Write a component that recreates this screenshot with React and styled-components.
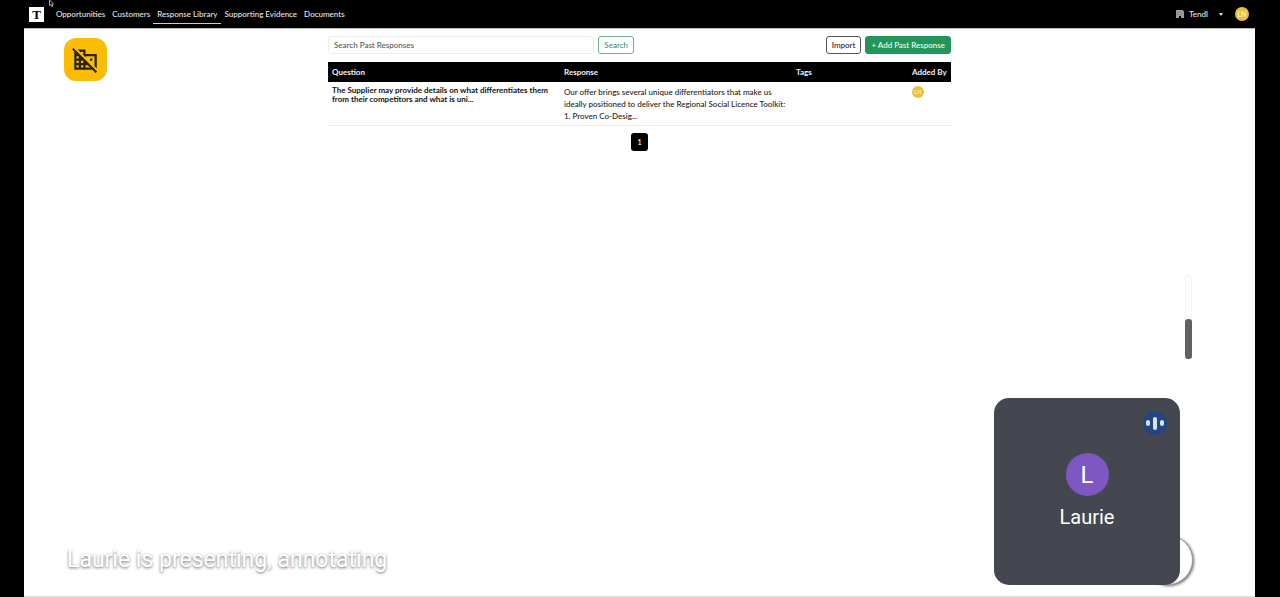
import React from "react";
import styled, { createGlobalStyle } from "styled-components";

const GlobalStyle = createGlobalStyle`
  * { box-sizing: border-box; }
  body {
    margin: 0;
    background: #000;
    color: #1c1c1c;
    font: 500 8px/12px Lato, "Noto Sans", sans-serif;
  }
  button, input, select { font: inherit; }
`;

const Stage = styled.div`
  position: relative;
  display: flex;
  flex-direction: column;
  min-height: 100vh;
  padding: 0 25px 0 24px;
  overflow: hidden;
`;

const NavBar = styled.header`
  display: flex;
  align-items: center;
  justify-content: space-between;
  height: 28px;
  padding: 0 6px 0 5px;
  background: #000;
  color: #e8e8e8;
`;

const NavGroup = styled.nav`
  display: flex;
  align-items: center;
  gap: 7px;
`;

const Logo = styled.a`
  display: grid;
  place-items: center;
  width: 15px;
  height: 15px;
  margin-right: 5px;
  background: #fff;
  color: #000;
  font: bold 13px/15px "Liberation Serif", serif;
  text-decoration: none;
`;

const NavLink = styled.a`
  position: relative;
  color: inherit;
  text-decoration: none;

  &[aria-current="page"]::after {
    content: "";
    position: absolute;
    inset: auto -4px -4px;
    height: 1px;
    background: #ccc;
  }
`;

const Account = styled.div`
  display: flex;
  align-items: center;
  gap: 4px;
`;

const OrgPicker = styled.label`
  display: flex;
  align-items: center;
  gap: 5px;
`;

const OrgSelect = styled.select`
  width: 25px;
  padding: 0;
  border: 0;
  appearance: none;
  background: transparent;
  color: #e8e8e8;
`;

const Avatar = styled.span`
  display: grid;
  place-items: center;
  width: ${(p) => p.$size}px;
  height: ${(p) => p.$size}px;
  margin-left: ${(p) => p.$gap || 0}px;
  border-radius: 50%;
  background: #e9c13b;
  color: #fff6d8;
  font-size: ${(p) => (p.$size > 12 ? 7 : 6)}px;
  line-height: 1;
`;

const Main = styled.main`
  flex: 1;
  padding: 7px 16px;
  border-top: 1px solid #bbb;
  border-bottom: 1px solid #ddd;
  background: #fff;
`;

const Container = styled.div`
  max-width: 623px;
  margin: 0 auto;
`;

const Toolbar = styled.div`
  display: flex;
  justify-content: space-between;
  gap: 16px;
  margin-bottom: 8px;
`;

const SearchForm = styled.form`
  display: flex;
  flex: 0 1 306px;
  gap: 4px;
`;

const Actions = styled.div`
  display: flex;
  gap: 4px;
`;

const SearchInput = styled.input`
  flex: 1;
  min-width: 0;
  height: 18px;
  padding: 0 5px;
  border: 1px solid #ececec;
  border-radius: 3px;
  background: #fff;
  color: #333;
  &::placeholder { color: #555; opacity: 1; }
`;

const tones = {
  outline: ["#fff", "#38956a", "#6fb094"],
  dark: ["#fff", "#222", "#555"],
  solid: ["#22965a", "#effff5", "#22965a"],
};

const Button = styled.button`
  height: 18px;
  padding: 0 5px;
  border: 1px solid ${(p) => tones[p.$tone][2]};
  border-radius: 3px;
  background: ${(p) => tones[p.$tone][0]};
  color: ${(p) => tones[p.$tone][1]};
  white-space: nowrap;
`;

const Table = styled.table`
  width: 100%;
  table-layout: fixed;
  border-collapse: collapse;
  border-bottom: 1px solid #ececec;
`;

const HeadCell = styled.th`
  width: ${(p) => p.$width || "auto"};
  height: 20px;
  padding: 0 4px;
  background: #000;
  color: #f4f4f4;
  text-align: left;
  white-space: nowrap;
`;

const Cell = styled.td`
  padding: 4px 4px 3px;
  vertical-align: top;
  white-space: pre-line;
`;

const Question = styled(Cell)`
  color: #111;
  font-weight: bold;
  line-height: 9px;
`;

const Pagination = styled.nav`
  display: flex;
  justify-content: center;
  margin-top: 7px;
`;

const PageButton = styled.button`
  width: 17px;
  height: 18px;
  padding: 0;
  border: 0;
  border-radius: 3px;
  background: #000;
  color: #fff;
`;

const CompanyBadge = styled.div`
  position: absolute;
  top: 38px;
  left: 64px;
  display: grid;
  place-items: center;
  width: 43px;
  height: 43px;
  border-radius: 12px;
  background: #fbbc04;
  color: #2c230c;
`;

const Pointer = styled.svg`
  position: absolute;
  top: 0;
  left: 49px;
`;

const ScrollTrack = styled.div`
  position: absolute;
  top: 275px;
  right: 88px;
  display: flex;
  align-items: flex-end;
  width: 7px;
  height: 84px;
  border: 1px solid #f3f3f3;
  border-radius: 4px;
`;

const ScrollThumb = styled.div`
  flex: none;
  width: 7px;
  height: 40px;
  margin: 0 -1px -1px;
  border-radius: 3px;
  background: #5f6164;
`;

const Caption = styled.p`
  position: absolute;
  bottom: 23px;
  left: 67px;
  margin: 0;
  color: #fff;
  font: 400 23px/28px Roboto, sans-serif;
  text-shadow: 0 1px 3px rgba(0, 0, 0, 0.6);
`;

const RoundButton = styled.button`
  position: absolute;
  right: 87px;
  bottom: 12px;
  width: 50px;
  height: 50px;
  border: 1px solid #999;
  border-radius: 50%;
  background: #fff;
  box-shadow: 1px 1px 3px rgba(0, 0, 0, 0.6);
`;

const Tile = styled.section`
  position: absolute;
  right: 100px;
  bottom: 12px;
  display: flex;
  flex-direction: column;
  align-items: center;
  gap: 7px;
  width: 186px;
  height: 187px;
  padding-top: 55px;
  border-radius: 15px;
  background: #44474f;
  color: #fff;
  font: 20px/28px Roboto, sans-serif;
`;

const Initial = styled.span`
  display: grid;
  place-items: center;
  width: 43px;
  height: 43px;
  border-radius: 50%;
  background: #7e57c2;
  font-size: 24px;
`;

const Speaking = styled.span`
  position: absolute;
  top: 13px;
  right: 13px;
  display: flex;
  align-items: center;
  justify-content: center;
  gap: 3px;
  width: 24px;
  height: 24px;
  border-radius: 50%;
  background: #24457f;
`;

const SoundBar = styled.i`
  width: 4px;
  height: ${(p) => p.$height}px;
  border-radius: 2px;
  background: #d3e3fd;
`;

const links = ["Opportunities", "Customers", "Response Library", "Supporting Evidence", "Documents"];

const BuildingIcon = () => (
  <svg width="8" height="8" viewBox="0 0 8 8" fill="#999" aria-hidden="true">
    <path d="M0 0h7v1h1v7H5V6H3v2H0z" />
    <path d="M1 2.500h6M1 4.500h6" stroke="#808080" strokeWidth="1" strokeDasharray="1 1" />
  </svg>
);

export default function App() {
  return (
    <>
      <GlobalStyle />
      <Stage>
        <NavBar>
          <NavGroup aria-label="Main">
            <Logo href="#home">T</Logo>
            {links.map((name) => (
              <NavLink key={name} href="#" aria-current={name === "Response Library" ? "page" : undefined}>
                {name}
              </NavLink>
            ))}
          </NavGroup>
          <Account>
            <OrgPicker>
              <BuildingIcon />
              <OrgSelect aria-label="Organisation" defaultValue="Tendl">
                <option>Tendl</option>
              </OrgSelect>
              <svg width="4" height="3" viewBox="0 0 4 3" fill="#ddd" aria-hidden="true">
                <path d="M0 0h4L2 3z" />
              </svg>
            </OrgPicker>
            <Avatar $size={14} $gap={8}>LN</Avatar>
          </Account>
        </NavBar>

        <Main>
          <Container>
            <Toolbar>
              <SearchForm onSubmit={(e) => e.preventDefault()}>
                <SearchInput aria-label="Search Past Responses" placeholder="Search Past Responses" />
                <Button $tone="outline">Search</Button>
              </SearchForm>
              <Actions>
                <Button type="button" $tone="dark">Import</Button>
                <Button type="button" $tone="solid">+ Add Past Response</Button>
              </Actions>
            </Toolbar>
            <Table>
              <thead>
                <tr>
                  <HeadCell>Question</HeadCell>
                  <HeadCell>Response</HeadCell>
                  <HeadCell $width="116px">Tags</HeadCell>
                  <HeadCell $width="43px">Added By</HeadCell>
                </tr>
              </thead>
              <tbody>
                <tr>
                  <Question>
                    {"The Supplier may provide details on what differentiates them\nfrom their competitors and what is uni..."}
                  </Question>
                  <Cell>
                    {"Our offer brings several unique differentiators that make us\nideally positioned to deliver the Regional Social Licence Toolkit:\n1. Proven Co-Desig..."}
                  </Cell>
                  <Cell />
                  <Cell>
                    <Avatar $size={12}>LN</Avatar>
                  </Cell>
                </tr>
              </tbody>
            </Table>
            <Pagination aria-label="Pages">
              <PageButton type="button">1</PageButton>
            </Pagination>
          </Container>
        </Main>

        <CompanyBadge>
          <svg width="27" height="27" viewBox="0 0 24 24" fill="currentColor" aria-hidden="true">
            <path d="M8 5h2v2h-.9L12 9.9V9h8v8.9l2 2V7H12V3H5.1L8 5.9zm8 6h2v2h-2zM1.3 1.8L.1 3.1 2 5v16h16l3 3 1.3-1.3-21-20.9zM4 19v-2h2v2H4zm0-4v-2h2v2H4zm0-4V9h2v2H4zm6 8H8v-2h2v2zm-2-4v-2h2v2H8zm4 4v-2h2l2 2h-4z" />
          </svg>
        </CompanyBadge>
        <Pointer width="6" height="8" viewBox="0 0 6 8" aria-hidden="true">
          <path d="M.5 0v5.500l1.300-1 1 2.200 1-.5-1-2.200h1.700z" fill="#000" stroke="#ccc" strokeWidth=".8" />
        </Pointer>
        <ScrollTrack>
          <ScrollThumb />
        </ScrollTrack>
        <Caption>Laurie is presenting, annotating</Caption>
        <RoundButton type="button" aria-label="More options" />
        <Tile>
          <Speaking>
            <SoundBar $height={6} />
            <SoundBar $height={13} />
            <SoundBar $height={6} />
          </Speaking>
          <Initial>L</Initial>
          <span>Laurie</span>
        </Tile>
      </Stage>
    </>
  );
}
